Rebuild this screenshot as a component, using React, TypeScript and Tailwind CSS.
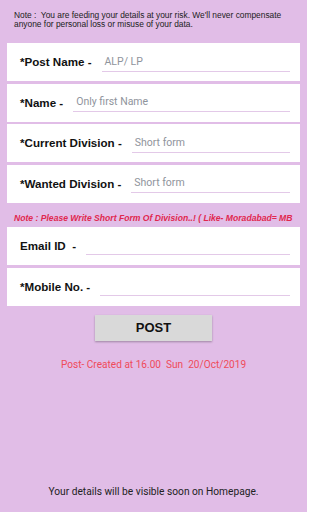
import React from "react";

type Field = { label: string; placeholder: string };

const topFields: Field[] = [
	{ label: "*Post Name -", placeholder: "ALP/ LP" },
	{ label: "*Name -", placeholder: "Only first Name" },
	{ label: "*Current Division -", placeholder: "Short form" },
	{ label: "*Wanted Division -", placeholder: "Short form" },
];

const bottomFields: Field[] = [
	{ label: "Email ID  -", placeholder: "" },
	{ label: "*Mobile No. -", placeholder: "" },
];

function FieldCard({ label, placeholder }: Field) {
	return (
		<div className="mx-[7px] h-[38px] bg-white flex items-center pl-[13px] pr-[10px]">
			<span className="text-[11.6px] font-bold text-[#111] whitespace-pre font-['Liberation_Sans',sans-serif]">{label}</span>
			<span className="w-[10px]"></span>
			<div className="flex-1 border-b border-[#e3c9e8] h-[19px] flex items-end pb-[1px] pl-[3px]">
				<span className="text-[10.5px] text-[#8f949c]">{placeholder}</span>
			</div>
		</div>
	);
}

export default function App() {
	return (
		<div className="w-[307px] h-[512px] bg-[#e1bde7] flex flex-col font-['Roboto',sans-serif] overflow-hidden">
			<p className="pt-[11px] px-[14px] text-[8.4px] leading-[9px] text-[#222] font-['Liberation_Sans',sans-serif]">
				Note :&nbsp; You are feeding your details at your risk. We'll never compensate anyone for personal loss or misuse of your data.
			</p>
			<div className="flex flex-col gap-[2.5px] mt-[14px]">
				{topFields.map((f, i) => (
					<FieldCard key={i} {...f} />
				))}
			</div>
			<p className="mt-[10px] leading-[10px] px-[14px] text-[8.6px] font-bold italic text-[#e0284f] whitespace-nowrap font-['Liberation_Sans',sans-serif]">
				Note : Please Write Short Form Of Division..! ( Like- Moradabad= MB
			</p>
			<div className="flex flex-col gap-[3px] mt-[4px]">
				{bottomFields.map((f, i) => (
					<FieldCard key={i} {...f} />
				))}
			</div>
			<div className="flex justify-center mt-[9px]">
				<button className="w-[117px] h-[26px] bg-[#d9d9d9] text-[13px] font-bold text-[#111] shadow-[0_1px_2px_rgba(0,0,0,0.3)] font-['Liberation_Sans',sans-serif]">
					POST
				</button>
			</div>
			<p className="mt-[18px] leading-[12px] text-center text-[10.1px] text-[#ef4b5a]">Post- Created at 16.00&nbsp; Sun&nbsp; 20/Oct/2019</p>
			<div className="flex-1"></div>
			<p className="pb-[14px] leading-[12px] text-center text-[10.2px] text-[#222]">Your details will be visible soon on Homepage.</p>
		</div>
	);
}
